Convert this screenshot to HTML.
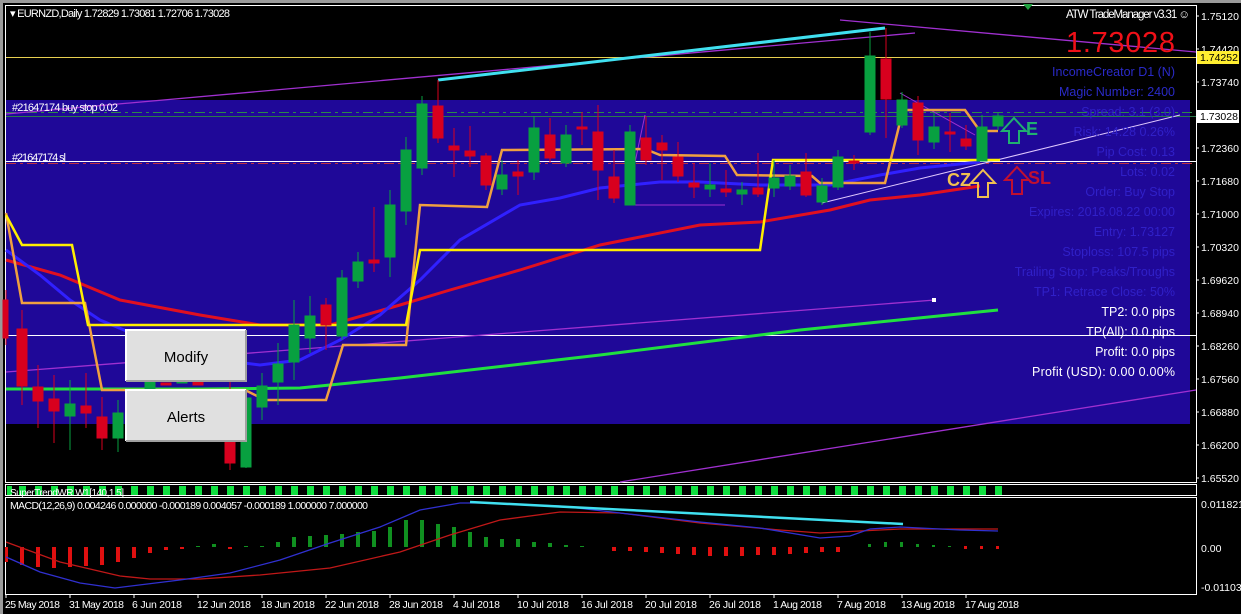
<!DOCTYPE html>
<html><head><meta charset="utf-8"><style>
html,body{margin:0;padding:0;background:#000;width:1241px;height:614px;overflow:hidden}
svg{display:block}
text{font-family:"Liberation Sans",sans-serif}
</style></head><body>
<svg width="1241" height="614" viewBox="0 0 1241 614" xmlns="http://www.w3.org/2000/svg">
<rect x="0" y="0" width="1241" height="614" fill="#000"/>
<rect x="0" y="0" width="1241" height="3" fill="#9a9a9a"/>
<rect x="0" y="0" width="3" height="614" fill="#9a9a9a"/>
<rect x="6" y="100" width="1184" height="324" fill="#1f0898"/>
<rect x="5.5" y="5.5" width="1191" height="477" fill="none" stroke="#fff" stroke-width="1"/>
<rect x="5.5" y="484.5" width="1191" height="11" fill="none" stroke="#fff" stroke-width="1"/>
<rect x="5.5" y="497.5" width="1191" height="97" fill="none" stroke="#fff" stroke-width="1"/>

<line x1="6" y1="57.5" x2="1196" y2="57.5" stroke="#e8d050" stroke-width="1"/>
<line x1="6" y1="112.5" x2="1196" y2="112.5" stroke="#2a8a4a" stroke-dasharray="10,4,3,4"/>
<line x1="6" y1="116.5" x2="1196" y2="116.5" stroke="#2a7a4a"/>
<line x1="6" y1="161.5" x2="1196" y2="161.5" stroke="#fff"/>
<line x1="6" y1="163.5" x2="1196" y2="163.5" stroke="#c03040" stroke-dasharray="10,4,3,4"/>
<line x1="6" y1="335.5" x2="1196" y2="335.5" stroke="#fff"/>

<line x1="6" y1="114" x2="915" y2="33" stroke="#a030d0" stroke-width="1.3"/>
<line x1="840" y1="20" x2="1196" y2="52" stroke="#a030d0" stroke-width="1.3"/>
<line x1="6" y1="372" x2="935" y2="300" stroke="#a030d0" stroke-width="1.3"/>
<line x1="620" y1="482" x2="1196" y2="390" stroke="#a030d0" stroke-width="1.3"/>
<rect x="932" y="298" width="4" height="4" fill="#fff"/>
<line x1="900" y1="93" x2="975" y2="135" stroke="#a030d0"/>
<line x1="645" y1="115" x2="626" y2="205" stroke="#a030d0"/>
<line x1="626" y1="205" x2="725" y2="205" stroke="#a030d0"/>
<line x1="822" y1="203" x2="1180" y2="115" stroke="#e0c8ff" stroke-width="1"/>
<line x1="438" y1="80" x2="885" y2="28" stroke="#40e0f0" stroke-width="3"/>

<polyline fill="none" stroke="#e01020" stroke-width="3" points="6,260 60,275 120,300 200,315 260,325 330,325 400,305 450,290 520,270 600,245 700,225 760,222 830,210 870,200 920,195 980,186"/>
<polyline fill="none" stroke="#3020ff" stroke-width="3" points="6,250 40,275 70,300 100,320 160,345 220,360 260,365 300,360 340,340 380,315 420,280 460,240 520,205 560,198 600,188 660,182 700,182 760,185 830,185 880,175 920,168 980,162"/>
<polyline fill="none" stroke="#20e040" stroke-width="3" points="6,389 200,389 300,388 400,378 600,355 800,330 998,310"/>
<polyline fill="none" stroke="#f0a040" stroke-width="2.5" points="6,213 22,303 85,303 102,390 245,390 265,400 326,400 343,345 406,345 420,205 487,207 502,150 645,149 660,155 725,156 737,175 812,176 820,183 885,183 903,110 965,110 980,131 998,131"/>
<polyline fill="none" stroke="#ffee00" stroke-width="2.5" points="6,215 22,245 72,245 88,325 406,325 420,250 760,250 773,160 1000,160"/>

<g stroke-width="1">
<g fill="#d8001e" stroke="#d8001e">
<line x1="6" y1="290" x2="6" y2="345"/><rect x="3" y="300" width="5" height="38"/>
<line x1="22" y1="310" x2="22" y2="405"/><rect x="17" y="329" width="10" height="57"/>
<line x1="38" y1="365" x2="38" y2="428"/><rect x="33" y="387" width="10" height="14"/>
<line x1="54" y1="375" x2="54" y2="443"/><rect x="49" y="399" width="10" height="12"/>
<line x1="86" y1="373" x2="86" y2="428"/><rect x="81" y="406" width="10" height="7"/>
<line x1="102" y1="397" x2="102" y2="450"/><rect x="97" y="417" width="10" height="21"/>
<rect x="161" y="383" width="10" height="2"/>
<rect x="193" y="378" width="10" height="7"/>
<rect x="209" y="370" width="10" height="10"/>
<line x1="230" y1="380" x2="230" y2="470"/><rect x="225" y="425" width="10" height="38"/>
<line x1="326" y1="298" x2="326" y2="350"/><rect x="321" y="305" width="10" height="20"/>
<line x1="374" y1="207" x2="374" y2="272"/><rect x="369" y="260" width="10" height="3"/>
<line x1="438" y1="80" x2="438" y2="143"/><rect x="433" y="106" width="10" height="32"/>
<line x1="454" y1="128" x2="454" y2="177"/><rect x="449" y="146" width="10" height="4"/>
<line x1="470" y1="126" x2="470" y2="167"/><rect x="465" y="151" width="10" height="5"/>
<line x1="486" y1="153" x2="486" y2="190"/><rect x="481" y="156" width="10" height="29"/>
<line x1="518" y1="160" x2="518" y2="195"/><rect x="513" y="172" width="10" height="4"/>
<line x1="550" y1="118" x2="550" y2="163"/><rect x="545" y="135" width="10" height="23"/>
<line x1="582" y1="112" x2="582" y2="145"/><rect x="577" y="127" width="10" height="2"/>
<line x1="598" y1="105" x2="598" y2="200"/><rect x="593" y="132" width="10" height="38"/>
<line x1="614" y1="150" x2="614" y2="203"/><rect x="609" y="177" width="10" height="21"/>
<line x1="646" y1="116" x2="646" y2="165"/><rect x="641" y="138" width="10" height="22"/>
<line x1="662" y1="135" x2="662" y2="180"/><rect x="657" y="143" width="10" height="7"/>
<line x1="678" y1="142" x2="678" y2="182"/><rect x="673" y="157" width="10" height="19"/>
<line x1="694" y1="163" x2="694" y2="198"/><rect x="689" y="183" width="10" height="4"/>
<line x1="726" y1="170" x2="726" y2="197"/><rect x="721" y="189" width="10" height="3"/>
<line x1="758" y1="153" x2="758" y2="197"/><rect x="753" y="188" width="10" height="6"/>
<line x1="806" y1="153" x2="806" y2="197"/><rect x="801" y="172" width="10" height="23"/>
<line x1="854" y1="155" x2="854" y2="170"/><rect x="849" y="161" width="10" height="2"/>
<line x1="886" y1="28" x2="886" y2="138"/><rect x="881" y="59" width="10" height="40"/>
<line x1="918" y1="96" x2="918" y2="155"/><rect x="913" y="103" width="10" height="37"/>
<line x1="950" y1="113" x2="950" y2="152"/><rect x="945" y="132" width="10" height="2"/>
<line x1="966" y1="125" x2="966" y2="150"/><rect x="961" y="139" width="10" height="7"/>
</g>
<g fill="#08a040" stroke="#08a040">
<line x1="70" y1="380" x2="70" y2="450"/><rect x="65" y="404" width="10" height="12"/>
<line x1="118" y1="400" x2="118" y2="452"/><rect x="113" y="413" width="10" height="25"/>
<rect x="145" y="380" width="10" height="10"/>
<rect x="177" y="380" width="10" height="3"/>
<line x1="246" y1="390" x2="246" y2="468"/><rect x="241" y="398" width="10" height="69"/>
<line x1="262" y1="373" x2="262" y2="420"/><rect x="257" y="386" width="10" height="21"/>
<line x1="278" y1="343" x2="278" y2="405"/><rect x="273" y="364" width="10" height="18"/>
<line x1="294" y1="300" x2="294" y2="380"/><rect x="289" y="325" width="10" height="37"/>
<line x1="310" y1="296" x2="310" y2="353"/><rect x="305" y="316" width="10" height="22"/>
<line x1="342" y1="270" x2="342" y2="340"/><rect x="337" y="278" width="10" height="58"/>
<line x1="358" y1="252" x2="358" y2="288"/><rect x="353" y="262" width="10" height="19"/>
<line x1="390" y1="190" x2="390" y2="277"/><rect x="385" y="205" width="10" height="52"/>
<line x1="406" y1="137" x2="406" y2="225"/><rect x="401" y="150" width="10" height="61"/>
<line x1="422" y1="96" x2="422" y2="175"/><rect x="417" y="104" width="10" height="64"/>
<line x1="502" y1="160" x2="502" y2="195"/><rect x="497" y="175" width="10" height="14"/>
<line x1="534" y1="116" x2="534" y2="180"/><rect x="529" y="128" width="10" height="44"/>
<line x1="566" y1="125" x2="566" y2="167"/><rect x="561" y="135" width="10" height="28"/>
<line x1="630" y1="125" x2="630" y2="205"/><rect x="625" y="132" width="10" height="73"/>
<line x1="710" y1="163" x2="710" y2="197"/><rect x="705" y="185" width="10" height="4"/>
<line x1="742" y1="182" x2="742" y2="205"/><rect x="737" y="190" width="10" height="4"/>
<line x1="774" y1="160" x2="774" y2="197"/><rect x="769" y="178" width="10" height="10"/>
<line x1="790" y1="165" x2="790" y2="190"/><rect x="785" y="176" width="10" height="10"/>
<line x1="822" y1="178" x2="822" y2="205"/><rect x="817" y="186" width="10" height="16"/>
<line x1="838" y1="150" x2="838" y2="190"/><rect x="833" y="157" width="10" height="30"/>
<line x1="870" y1="32" x2="870" y2="135"/><rect x="865" y="56" width="10" height="76"/>
<line x1="902" y1="92" x2="902" y2="128"/><rect x="897" y="100" width="10" height="25"/>
<line x1="934" y1="113" x2="934" y2="149"/><rect x="929" y="127" width="10" height="15"/>
<line x1="982" y1="115" x2="982" y2="161"/><rect x="977" y="127" width="10" height="34"/>
<line x1="998" y1="113" x2="998" y2="130"/><rect x="993" y="116" width="10" height="10"/>
</g>
</g>

<path d="M1014,118 L1026,131 L1019,131 L1019,143 L1009,143 L1009,131 L1002,131 Z" fill="none" stroke="#20b070" stroke-width="2"/>
<text x="1026" y="135" font-size="18" font-weight="bold" fill="#20b070">E</text>
<path d="M983,170 L995,183 L988,183 L988,197 L978,197 L978,183 L971,183 Z" fill="none" stroke="#f0c050" stroke-width="2"/>
<text x="947" y="186" font-size="18" font-weight="bold" fill="#f0c050">CZ</text>
<path d="M1017,167 L1029,180 L1022,180 L1022,194 L1012,194 L1012,180 L1005,180 Z" fill="none" stroke="#c01030" stroke-width="2"/>
<text x="1028" y="184" font-size="18" font-weight="bold" fill="#c01030">SL</text>
<path d="M1023,4 L1033,4 L1028,10 Z" fill="#20a040"/>

<text x="12" y="111" font-size="11" fill="#fff" textLength="106">#21647174 buy stop 0.02</text>
<text x="12" y="161" font-size="11" fill="#fff" textLength="54">#21647174 sl</text>
<text x="10" y="17" font-size="11" fill="#fff" textLength="220">▾ EURNZD,Daily  1.72829 1.73081 1.72706 1.73028</text>

<g font-size="12.5" text-anchor="end">
<text x="1190" y="18" font-size="11.5" fill="#fff" textLength="124">ATW TradeManager v3.31 ☺</text>
<text x="1175" y="52" font-size="29" fill="#f01018" textLength="109">1.73028</text>
<text x="1175" y="76" fill="#2a2ac8">IncomeCreator D1 (N)</text>
<text x="1175" y="96" fill="#2a2ac8">Magic Number: 2400</text>
<text x="1175" y="116" fill="#3020c8">Spread: 3.1 (3.0)</text>
<text x="1175" y="136" fill="#3020c8">Risk: 14.28 0.26%</text>
<text x="1175" y="156" fill="#3020c8">Pip Cost: 0.13</text>
<text x="1175" y="176" fill="#3020c8">Lots: 0.02</text>
<text x="1175" y="196" fill="#3020c8">Order: Buy Stop</text>
<text x="1175" y="216" fill="#3020c8">Expires: 2018.08.22 00:00</text>
<text x="1175" y="236" fill="#3020c8">Entry: 1.73127</text>
<text x="1175" y="256" fill="#3020c8">Stoploss: 107.5 pips</text>
<text x="1175" y="276" fill="#3020c8">Trailing Stop: Peaks/Troughs</text>
<text x="1175" y="296" fill="#3020c8">TP1: Retrace Close: 50%</text>
<text x="1175" y="316" fill="#fff">TP2: 0.0 pips</text>
<text x="1175" y="336" fill="#fff">TP(All): 0.0 pips</text>
<text x="1175" y="356" fill="#fff">Profit: 0.0 pips</text>
<text x="1175" y="376" fill="#fff" textLength="143">Profit (USD): 0.00 0.00%</text>
</g>

<g>
<rect x="126" y="330" width="120" height="51" fill="#e0e0e0"/>
<path d="M126,381 V330 H246" fill="none" stroke="#fff" stroke-width="2"/>
<path d="M126,381 H246 V330" fill="none" stroke="#a0a0a0" stroke-width="2"/>
<text x="186" y="362" font-size="15" text-anchor="middle" fill="#000">Modify</text>
<rect x="126" y="390" width="120" height="51" fill="#e0e0e0"/>
<path d="M126,441 V390 H246" fill="none" stroke="#fff" stroke-width="2"/>
<path d="M126,441 H246 V390" fill="none" stroke="#a0a0a0" stroke-width="2"/>
<text x="186" y="422" font-size="15" text-anchor="middle" fill="#000">Alerts</text>
</g>

<g font-size="10.5" fill="#fff">
<text x="1201" y="20">1.75120</text>
<text x="1201" y="53">1.74420</text>
<rect x="1197" y="51" width="42" height="13" fill="#ffee30"/>
<text x="1200" y="61" fill="#000">1.74252</text>
<text x="1201" y="86">1.73740</text>
<rect x="1197" y="110" width="42" height="13" fill="#fff"/>
<text x="1200" y="120" fill="#000">1.73028</text>
<text x="1201" y="152">1.72360</text>
<text x="1201" y="185">1.71680</text>
<text x="1201" y="218">1.71000</text>
<text x="1201" y="251">1.70320</text>
<text x="1201" y="284">1.69620</text>
<text x="1201" y="317">1.68940</text>
<text x="1201" y="350">1.68260</text>
<text x="1201" y="383">1.67560</text>
<text x="1201" y="416">1.66880</text>
<text x="1201" y="449">1.66200</text>
<text x="1201" y="482">1.65520</text>
<text x="1201" y="508">0.011821</text>
<text x="1201" y="552">0.00</text>
<text x="1201" y="591">-0.011036</text>
</g>
<g stroke="#fff"><line x1="1196" y1="16" x2="1199" y2="16"/><line x1="1196" y1="49" x2="1199" y2="49"/><line x1="1196" y1="82" x2="1199" y2="82"/><line x1="1196" y1="148" x2="1199" y2="148"/><line x1="1196" y1="181" x2="1199" y2="181"/><line x1="1196" y1="214" x2="1199" y2="214"/><line x1="1196" y1="247" x2="1199" y2="247"/><line x1="1196" y1="280" x2="1199" y2="280"/><line x1="1196" y1="313" x2="1199" y2="313"/><line x1="1196" y1="346" x2="1199" y2="346"/><line x1="1196" y1="379" x2="1199" y2="379"/><line x1="1196" y1="412" x2="1199" y2="412"/><line x1="1196" y1="445" x2="1199" y2="445"/><line x1="1196" y1="478" x2="1199" y2="478"/></g>

<g fill="#10e040">
<rect x="7" y="486" width="5" height="9"/><rect x="19" y="486" width="7" height="9"/><rect x="35" y="486" width="7" height="9"/><rect x="51" y="486" width="7" height="9"/><rect x="67" y="486" width="7" height="9"/><rect x="83" y="486" width="7" height="9"/><rect x="99" y="486" width="7" height="9"/><rect x="115" y="486" width="7" height="9"/><rect x="131" y="486" width="7" height="9"/><rect x="147" y="486" width="7" height="9"/><rect x="163" y="486" width="7" height="9"/><rect x="179" y="486" width="7" height="9"/><rect x="195" y="486" width="7" height="9"/><rect x="211" y="486" width="7" height="9"/><rect x="227" y="486" width="7" height="9"/><rect x="243" y="486" width="7" height="9"/><rect x="259" y="486" width="7" height="9"/><rect x="275" y="486" width="7" height="9"/><rect x="291" y="486" width="7" height="9"/><rect x="307" y="486" width="7" height="9"/><rect x="323" y="486" width="7" height="9"/><rect x="339" y="486" width="7" height="9"/><rect x="355" y="486" width="7" height="9"/><rect x="371" y="486" width="7" height="9"/><rect x="387" y="486" width="7" height="9"/><rect x="403" y="486" width="7" height="9"/><rect x="419" y="486" width="7" height="9"/><rect x="435" y="486" width="7" height="9"/><rect x="451" y="486" width="7" height="9"/><rect x="467" y="486" width="7" height="9"/><rect x="483" y="486" width="7" height="9"/><rect x="499" y="486" width="7" height="9"/><rect x="515" y="486" width="7" height="9"/><rect x="531" y="486" width="7" height="9"/><rect x="547" y="486" width="7" height="9"/><rect x="563" y="486" width="7" height="9"/><rect x="579" y="486" width="7" height="9"/><rect x="595" y="486" width="7" height="9"/><rect x="611" y="486" width="7" height="9"/><rect x="627" y="486" width="7" height="9"/><rect x="643" y="486" width="7" height="9"/><rect x="659" y="486" width="7" height="9"/><rect x="675" y="486" width="7" height="9"/><rect x="691" y="486" width="7" height="9"/><rect x="707" y="486" width="7" height="9"/><rect x="723" y="486" width="7" height="9"/><rect x="739" y="486" width="7" height="9"/><rect x="755" y="486" width="7" height="9"/><rect x="771" y="486" width="7" height="9"/><rect x="787" y="486" width="7" height="9"/><rect x="803" y="486" width="7" height="9"/><rect x="819" y="486" width="7" height="9"/><rect x="835" y="486" width="7" height="9"/><rect x="851" y="486" width="7" height="9"/><rect x="867" y="486" width="7" height="9"/><rect x="883" y="486" width="7" height="9"/><rect x="899" y="486" width="7" height="9"/><rect x="915" y="486" width="7" height="9"/><rect x="931" y="486" width="7" height="9"/><rect x="947" y="486" width="7" height="9"/><rect x="963" y="486" width="7" height="9"/><rect x="979" y="486" width="7" height="9"/><rect x="995" y="486" width="7" height="9"/>
</g>
<text x="10" y="496" font-size="10" fill="#fff" textLength="114">SuperTrendWR W1[140,1.5]</text>

<text x="10" y="509" font-size="10.5" fill="#fff" textLength="358">MACD(12,26,9) 0.004246 0.000000 -0.000189 0.004057 -0.000189 1.000000 7.000000</text>
<g fill="#e01010">
<rect x="5" y="547" width="3" height="15"/><rect x="20" y="547" width="4" height="18"/><rect x="36" y="547" width="4" height="20"/><rect x="52" y="547" width="4" height="21"/><rect x="68" y="547" width="4" height="20"/><rect x="84" y="547" width="4" height="19"/><rect x="100" y="547" width="4" height="18"/><rect x="116" y="547" width="4" height="15"/><rect x="132" y="547" width="4" height="11"/><rect x="148" y="547" width="4" height="6"/><rect x="164" y="547" width="4" height="3"/><rect x="180" y="547" width="4" height="2"/><rect x="228" y="547" width="4" height="2"/>
<rect x="612" y="547" width="4" height="4"/><rect x="628" y="547" width="4" height="4"/><rect x="644" y="547" width="4" height="5"/><rect x="660" y="547" width="4" height="6"/><rect x="676" y="547" width="4" height="7"/><rect x="692" y="547" width="4" height="8"/><rect x="708" y="547" width="4" height="9"/><rect x="724" y="547" width="4" height="9"/><rect x="740" y="547" width="4" height="9"/><rect x="756" y="547" width="4" height="8"/><rect x="772" y="547" width="4" height="8"/><rect x="788" y="547" width="4" height="7"/><rect x="804" y="547" width="4" height="6"/><rect x="820" y="547" width="4" height="5"/><rect x="836" y="547" width="4" height="5"/>
<rect x="964" y="546" width="3" height="3"/><rect x="980" y="546" width="3" height="3"/><rect x="996" y="546" width="3" height="3"/>
</g>
<g fill="#109020">
<rect x="196" y="546" width="4" height="1"/><rect x="212" y="544" width="4" height="3"/><rect x="244" y="546" width="4" height="1"/><rect x="260" y="546" width="4" height="1"/><rect x="276" y="542" width="4" height="5"/><rect x="292" y="537" width="4" height="10"/><rect x="308" y="536" width="4" height="11"/><rect x="324" y="535" width="4" height="12"/><rect x="340" y="534" width="4" height="13"/><rect x="356" y="532" width="4" height="15"/><rect x="372" y="531" width="4" height="16"/><rect x="388" y="527" width="4" height="20"/><rect x="404" y="520" width="4" height="27"/><rect x="420" y="520" width="4" height="27"/><rect x="436" y="524" width="4" height="23"/><rect x="452" y="527" width="4" height="20"/><rect x="468" y="532" width="4" height="15"/><rect x="484" y="537" width="4" height="10"/><rect x="500" y="539" width="4" height="8"/><rect x="516" y="539" width="4" height="8"/><rect x="532" y="542" width="4" height="5"/><rect x="548" y="543" width="4" height="4"/><rect x="564" y="545" width="4" height="2"/><rect x="580" y="546" width="4" height="1"/>
<rect x="868" y="544" width="3" height="3"/><rect x="884" y="542" width="3" height="5"/><rect x="900" y="542" width="3" height="5"/><rect x="916" y="544" width="3" height="3"/><rect x="932" y="545" width="3" height="2"/><rect x="948" y="546" width="3" height="1"/>
</g>
<polyline fill="none" stroke="#c01818" stroke-width="1.3" points="6,542 60,562 120,576 150,579 200,579 260,575 330,568 400,552 450,535 500,520 560,512 620,513 700,523 780,530 820,533 860,531 900,529 998,529"/>
<polyline fill="none" stroke="#3030d0" stroke-width="1.3" points="6,557 40,572 80,583 115,588 180,580 230,573 280,560 330,543 380,527 420,510 460,503 490,503 560,506 620,513 700,522 760,528 820,538 850,536 870,529 900,527 960,530 998,531"/>
<line x1="470" y1="502" x2="903" y2="524" stroke="#40e0f0" stroke-width="2.5"/>

<g font-size="10.5" fill="#fff">
<text x="5" y="608" textLength="55">25 May 2018</text>
<text x="69" y="608" textLength="55">31 May 2018</text>
<text x="132" y="608" textLength="50">6 Jun 2018</text>
<text x="197" y="608" textLength="54">12 Jun 2018</text>
<text x="261" y="608" textLength="54">18 Jun 2018</text>
<text x="325" y="608" textLength="54">22 Jun 2018</text>
<text x="389" y="608" textLength="54">28 Jun 2018</text>
<text x="453" y="608" textLength="47">4 Jul 2018</text>
<text x="517" y="608" textLength="52">10 Jul 2018</text>
<text x="581" y="608" textLength="52">16 Jul 2018</text>
<text x="645" y="608" textLength="52">20 Jul 2018</text>
<text x="709" y="608" textLength="52">26 Jul 2018</text>
<text x="773" y="608" textLength="49">1 Aug 2018</text>
<text x="837" y="608" textLength="49">7 Aug 2018</text>
<text x="901" y="608" textLength="54">13 Aug 2018</text>
<text x="965" y="608" textLength="54">17 Aug 2018</text>
</g>
<g stroke="#fff"><line x1="6" y1="594" x2="6" y2="598"/><line x1="70" y1="594" x2="70" y2="598"/><line x1="134" y1="594" x2="134" y2="598"/><line x1="198" y1="594" x2="198" y2="598"/><line x1="262" y1="594" x2="262" y2="598"/><line x1="326" y1="594" x2="326" y2="598"/><line x1="390" y1="594" x2="390" y2="598"/><line x1="454" y1="594" x2="454" y2="598"/><line x1="518" y1="594" x2="518" y2="598"/><line x1="582" y1="594" x2="582" y2="598"/><line x1="646" y1="594" x2="646" y2="598"/><line x1="710" y1="594" x2="710" y2="598"/><line x1="774" y1="594" x2="774" y2="598"/><line x1="838" y1="594" x2="838" y2="598"/><line x1="902" y1="594" x2="902" y2="598"/><line x1="966" y1="594" x2="966" y2="598"/></g>
</svg>
</body></html>
